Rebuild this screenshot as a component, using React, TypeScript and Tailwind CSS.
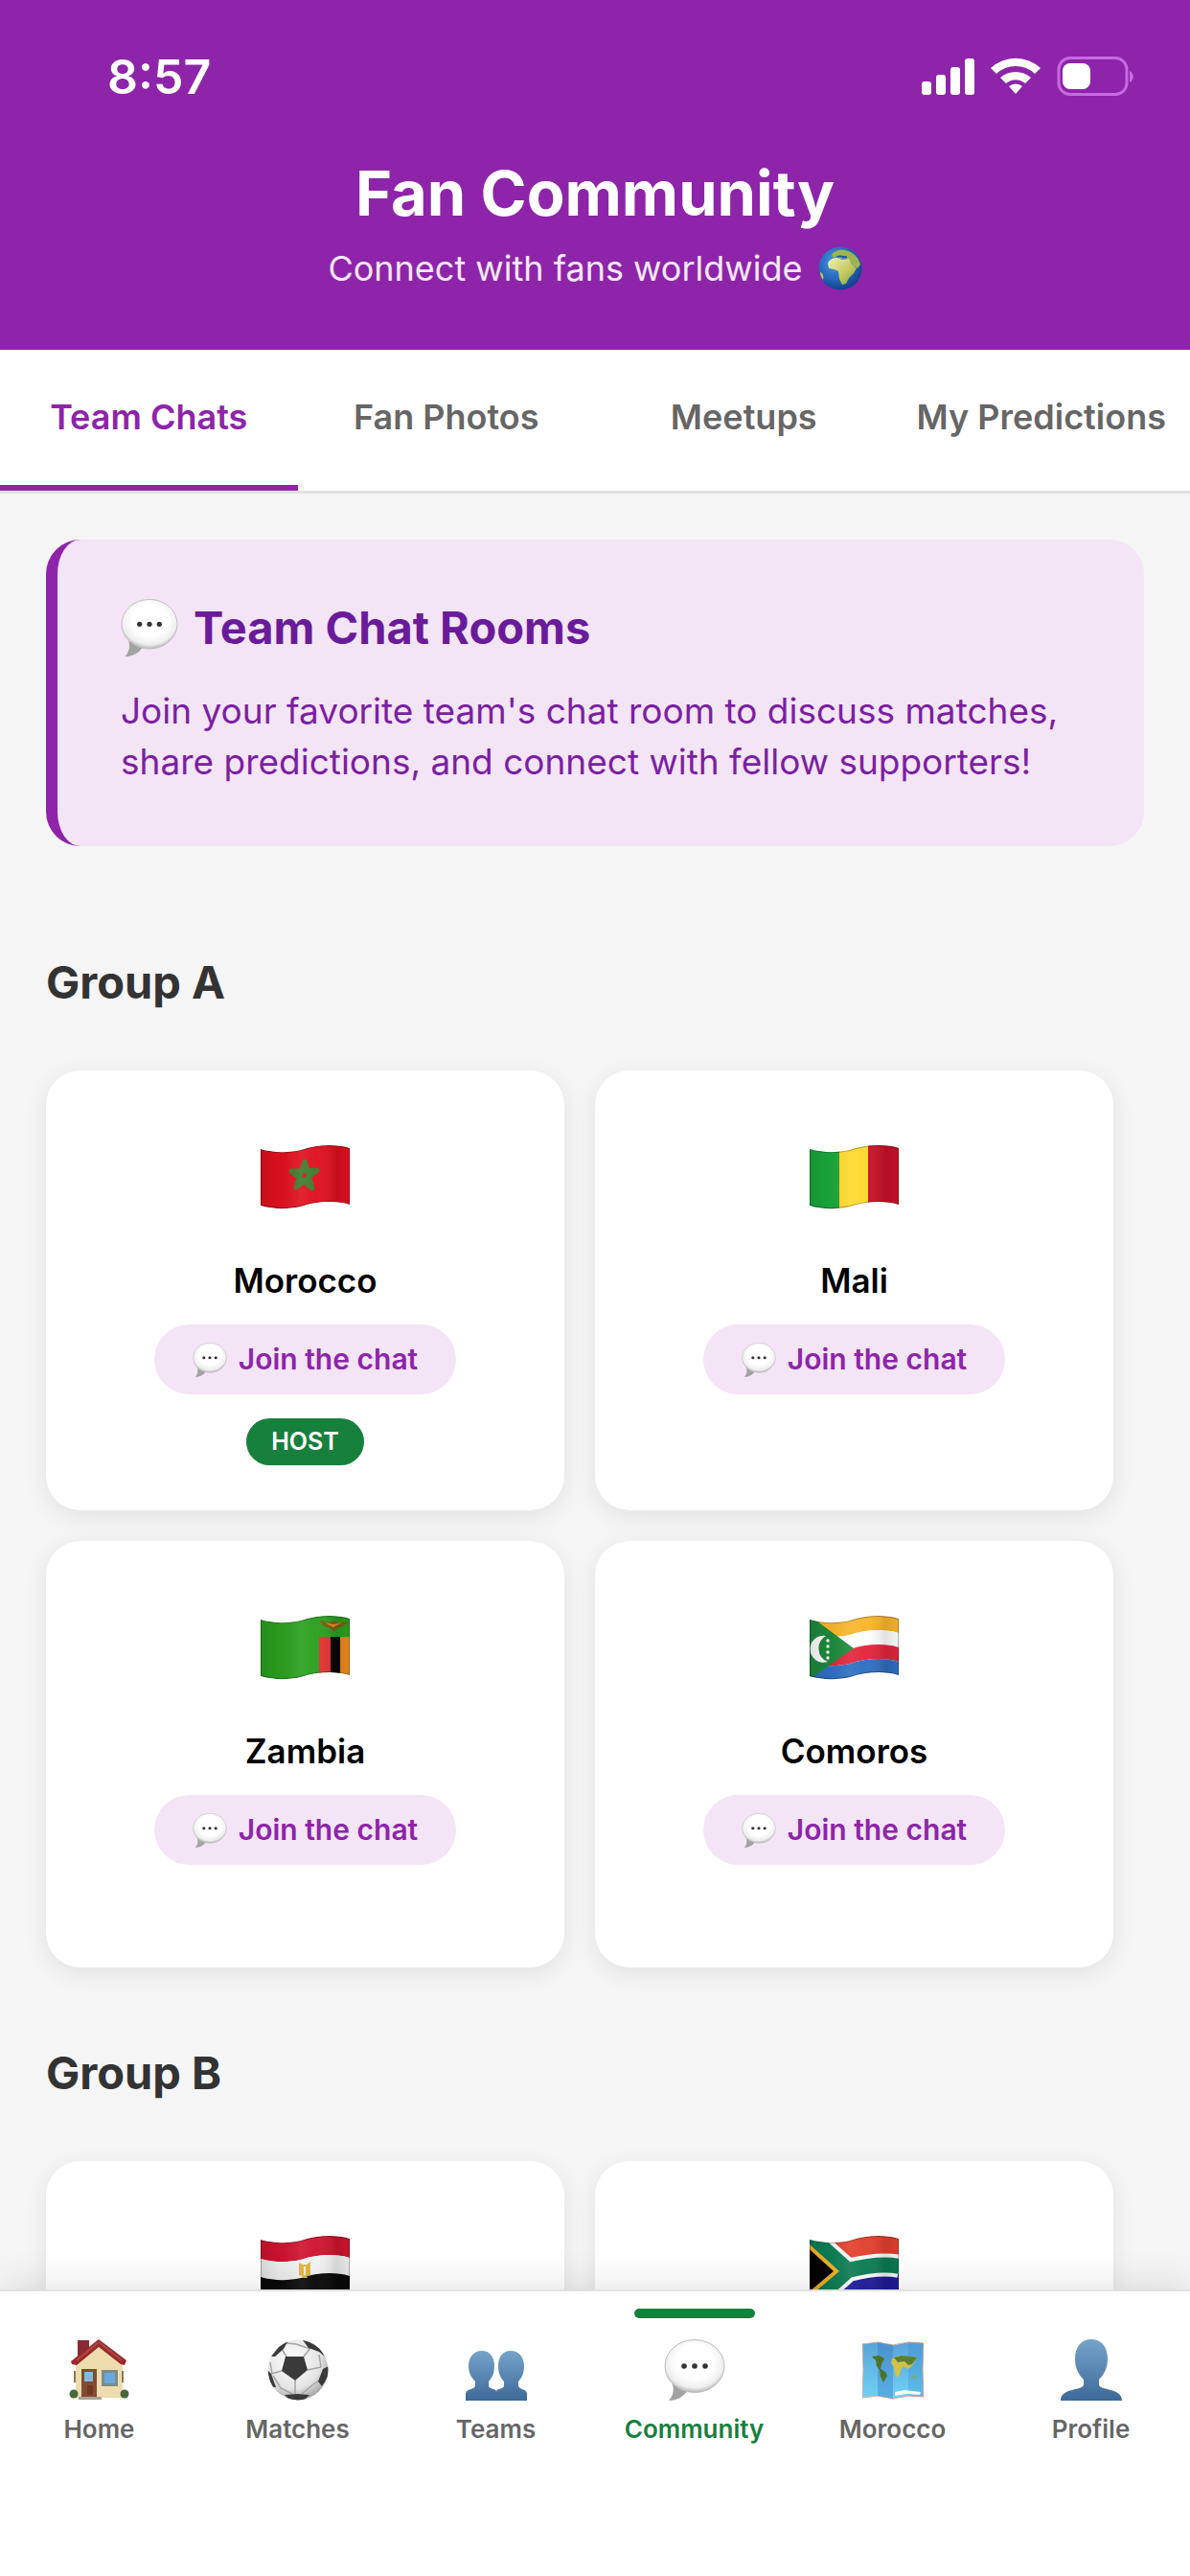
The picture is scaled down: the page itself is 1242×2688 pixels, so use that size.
import { useId, useState, type ReactNode } from "react";

interface Team {
  name: string;
  flag: ReactNode;
  host?: boolean;
}

// Closed band of the waving cloth between two heights (0 = top edge, 59 = bottom edge).
function band(a: number, b: number) {
  return (
    `M0 ${4 + a}C14 ${8 + a} 28 ${8 + a} 42 ${5 + a}C58 ${a} 76 ${a - 2} 93 ${3 + a}` +
    `V${3 + b}C76 ${b - 2} 58 ${b} 42 ${5 + b}C28 ${8 + b} 14 ${8 + b} 0 ${4 + b}Z`
  );
}

function Flag({ label, children }: { label: string; children: ReactNode }) {
  const id = useId();
  return (
    <svg role="img" aria-label={label} viewBox="0 0 93 67" className="h-[67px] w-[93px]">
      <defs>
        <clipPath id={`${id}clip`}>
          <path d={band(0, 59)} />
        </clipPath>
        <linearGradient id={`${id}shade`} x1="0" x2="1" y1="0" y2="0">
          <stop offset="0" stopColor="#000" stopOpacity=".12" />
          <stop offset=".2" stopColor="#000" stopOpacity=".04" />
          <stop offset=".45" stopColor="#fff" stopOpacity=".08" />
          <stop offset=".62" stopColor="#fff" stopOpacity=".03" />
          <stop offset=".85" stopColor="#000" stopOpacity=".12" />
          <stop offset="1" stopColor="#000" stopOpacity=".04" />
        </linearGradient>
      </defs>
      <g clipPath={`url(#${id}clip)`}>
        {children}
        <path d={band(0, 59)} fill={`url(#${id}shade)`} />
        <path d={band(0, 59)} fill="none" stroke="#000" strokeOpacity=".28" strokeWidth="2" />
      </g>
    </svg>
  );
}

const MoroccoFlag = (
  <Flag label="Flag of Morocco">
    <path d={band(0, 59)} fill="#e0101f" />
    <path
      d="M46 17 54 45 32 27 59 26 37 44Z"
      fill="none"
      stroke="#3f7a2c"
      strokeWidth="5"
      strokeLinejoin="round"
    />
  </Flag>
);

const MaliFlag = (
  <Flag label="Flag of Mali">
    <path d="M0 0h31v67H0z" fill="#1aa83b" />
    <path d="M31 0h30v67H31z" fill="#ffd92e" />
    <path d="M61 0h32v67H61z" fill="#cb1228" />
  </Flag>
);

const ZambiaFlag = (
  <Flag label="Flag of Zambia">
    <path d={band(0, 59)} fill="#2aa01f" />
    <path d="M61 22h12v45H61z" fill="#e2342f" />
    <path d="M73 22h10v45H73z" fill="#0b0403" />
    <path d="M83 22h10v45H83z" fill="#e9891c" />
    <path d="M61 5 72 7 76 5 80 7 92 6 86 11 80 13 76 17 72 13 66 11Z" fill="#7c5f12" />
    <path d="M67 7 76 9 85 7 76 12Z" fill="#ee8b23" />
  </Flag>
);

const ComorosFlag = (
  <Flag label="Flag of Comoros">
    <path d={band(0, 15)} fill="#f9b62c" />
    <path d={band(15, 30)} fill="#fff" />
    <path d={band(30, 45)} fill="#e3263c" />
    <path d={band(45, 60)} fill="#2f6fc2" />
    <path d="M0 0 46 34 0 66Z" fill="#1d8a3d" />
    <path d="M17 21a14 14 0 1 0 2 27 15 15 0 0 1-2-27Z" fill="#fff" />
    <g fill="#fff">
      <circle cx="19" cy="26" r="1.7" />
      <circle cx="19" cy="32" r="1.7" />
      <circle cx="19" cy="38" r="1.7" />
      <circle cx="19" cy="44" r="1.7" />
    </g>
  </Flag>
);

const EgyptFlag = (
  <Flag label="Flag of Egypt">
    <path d={band(0, 20)} fill="#d0142f" />
    <path d={band(20, 39)} fill="#f4f4f4" />
    <path d={band(39, 60)} fill="#0a0a0a" />
    <path d="M40 28l4 2h4l4-3v14l-4 1 1 2h-6l1-2-4-1z" fill="#e3b23c" />
    <path d="M46 32v9" stroke="#fff3cf" strokeWidth="2" />
  </Flag>
);

const SouthAfricaFlag = (
  <Flag label="Flag of South Africa">
    <path d={band(0, 30)} fill="#e2412e" />
    <path d={band(29, 60)} fill="#1f1d9c" />
    <path d="M0 0 40 36C56 32 76 28 94 32M0 72 40 36" fill="none" stroke="#fff" strokeWidth="24" />
    <path d="M0 0 40 36C56 32 76 28 94 32M0 72 40 36" fill="none" stroke="#0c7f55" strokeWidth="16" />
    <path d="M-4 8 28 37-4 64Z" fill="#050505" stroke="#f6b42c" strokeWidth="4" />
  </Flag>
);

const GROUPS: { name: string; teams: Team[] }[] = [
  {
    name: "Group A",
    teams: [
      { name: "Morocco", flag: MoroccoFlag, host: true },
      { name: "Mali", flag: MaliFlag },
      { name: "Zambia", flag: ZambiaFlag },
      { name: "Comoros", flag: ComorosFlag },
    ],
  },
  {
    name: "Group B",
    teams: [
      { name: "Egypt", flag: EgyptFlag },
      { name: "South Africa", flag: SouthAfricaFlag },
    ],
  },
];

const TABS = ["Team Chats", "Fan Photos", "Meetups", "My Predictions"];

function SpeechIcon({ className }: { className: string }) {
  const id = useId();
  return (
    <svg viewBox="0 0 64 64" className={className} aria-hidden="true">
      <defs>
        <radialGradient id={id} cx=".5" cy=".42" r=".58">
          <stop offset=".55" stopColor="#fff" />
          <stop offset=".85" stopColor="#eee" />
          <stop offset="1" stopColor="#b5b5b5" />
        </radialGradient>
      </defs>
      <path d="M8 44C11 52 10 58 5 64c9 0 15-4 20-11Z" fill="#a2a2a2" />
      <ellipse cx="32" cy="28" rx="31" ry="27.5" fill={`url(#${id})`} stroke="#bdbdbd" />
      <g fill="#333">
        <circle cx="21" cy="28" r="2.8" />
        <circle cx="32" cy="28" r="2.8" />
        <circle cx="43" cy="28" r="2.8" />
      </g>
    </svg>
  );
}

function GlobeIcon() {
  return (
    <svg viewBox="0 0 46 46" className="size-[46px]" role="img" aria-label="Globe">
      <defs>
        <radialGradient id="ocean" cx=".4" cy=".35" r=".7">
          <stop offset="0" stopColor="#4f9be6" />
          <stop offset=".6" stopColor="#2465b9" />
          <stop offset="1" stopColor="#123c86" />
        </radialGradient>
        <linearGradient id="land" x1="0" x2="1" y1="0" y2="1">
          <stop offset="0" stopColor="#f2f0b4" />
          <stop offset=".55" stopColor="#c6cb62" />
          <stop offset="1" stopColor="#7ea43e" />
        </linearGradient>
      </defs>
      <circle cx="23" cy="23" r="22.5" fill="url(#ocean)" />
      <path d="M14 9c2-4 8-6 14-5 8 2 14 7 16 15l-3 4-5-3-4-6-5-2-5 1-2-3-4 2z" fill="#9db553" />
      <path
        d="M10 18c2-5 6-6 10-6l5 2 7-1 3 6 5 4-3 5-5 5-3 6-4 1-3-6-1-8-5-2-5-1z"
        fill="url(#land)"
      />
      <path d="M2 27c3 1 4 4 3 8-2-2-3-5-3-8z" fill="#b9c258" />
      <path d="M20 11c3-2 6 1 10 0" stroke="#1c569f" strokeWidth="2" fill="none" />
    </svg>
  );
}

function HomeIcon() {
  return (
    <svg viewBox="0 0 64 64" className="size-16" aria-hidden="true">
      <path d="M9 1h12v20H9z" fill="#8c2a33" />
      <path d="M7 27 31 5 56 27V61H7z" fill="#efdcae" />
      <path d="M31 0 60 22l-2 5-4-1L31 8 8 27l-5-1-1-3Z" fill="#962a2e" />
      <path d="M31 3 55 22M31 3 8 22" stroke="#b34644" strokeWidth="2" />
      <path d="M13 31h16v30H13z" fill="#854a33" />
      <path d="M16 34h9v10h-9z" fill="#83b9e4" />
      <path d="M19 48h6v10h-6z" fill="#733a22" />
      <path d="M34 32h17v17H34z" fill="#7c8d84" />
      <path d="M37 35h11v11H37z" fill="#68a8de" />
      <path d="M5 33h2v12H5zM55 33h2v12h-2z" fill="#8f7a4d" />
      <circle cx="5" cy="57" r="4.5" fill="#47683a" />
      <circle cx="58" cy="57" r="4.5" fill="#47683a" />
      <path d="M10 60h24v3H10z" fill="#a9a39a" />
    </svg>
  );
}

function BallIcon() {
  return (
    <svg viewBox="0 0 64 64" className="size-16" aria-hidden="true">
      <defs>
        <radialGradient id="ball" cx=".42" cy=".35" r=".65">
          <stop offset="0" stopColor="#fff" />
          <stop offset=".7" stopColor="#e4e4e4" />
          <stop offset="1" stopColor="#a9a9a9" />
        </radialGradient>
        <clipPath id="ballClip">
          <circle cx="32" cy="32" r="31.5" />
        </clipPath>
      </defs>
      <g clipPath="url(#ballClip)">
        <circle cx="32" cy="32" r="31.5" fill="url(#ball)" />
        <path
          d="M20 18 15 10M38 18l7-9M15 33 4 36M42 32l14-3M29 43v14M45 10 30 5 20 4M5 36 3 24M6 38l8 13 12 6M36 57l12-10 6-4M56 29 54 16"
          fill="none"
          stroke="#a5a5a5"
          strokeWidth="1.5"
        />
        <g fill="#3a3a3a">
          <path d="M19 18h19l4 14-13 11-14-10Z" />
          <path d="M4 18 12 8 22 1 17 10 8 18Z" />
          <path d="M37 1 52 4 60 18 54 13 43 9Z" />
          <path d="M0 32 4 36 9 50 4 50Z" />
          <path d="M64 28 58 31 53 44 57 49 64 38Z" />
          <path d="M18 58 31 57 44 58 38 64H24Z" />
        </g>
      </g>
    </svg>
  );
}

function BustGradient({ id }: { id: string }) {
  return (
    <defs>
      <linearGradient id={id} x1="0" x2="0" y1="0" y2="1">
        <stop offset="0" stopColor="#76a3cb" />
        <stop offset="1" stopColor="#3d6a98" />
      </linearGradient>
    </defs>
  );
}

function PeopleIcon() {
  return (
    <svg viewBox="0 0 64 64" className="size-16" aria-hidden="true">
      <BustGradient id="people" />
      <path
        d="M17 12c8 0 13 6 13 16 0 8-3 13-6 16v4c0 4 6 3 8 6 2-3 8-2 8-6v-4c-3-3-6-8-6-16 0-10 5-16 13-16s14 6 14 16c0 8-3 13-6 16v4c0 5 9 3 9 9v7H0v-7c0-6 10-4 10-9v-4c-3-3-7-8-7-16 0-10 6-16 14-16Z"
        fill="url(#people)"
      />
    </svg>
  );
}

function MapIcon() {
  return (
    <svg viewBox="0 0 64 64" className="size-16" aria-hidden="true">
      <defs>
        <linearGradient id="sea" x1="0" x2="0" y1="0" y2="1">
          <stop offset="0" stopColor="#5aa3d8" />
          <stop offset="1" stopColor="#6fd2f5" />
        </linearGradient>
      </defs>
      <path
        d="M0 5 16 3 32 6 48 3 64 4 63 32 64 60 48 59 32 62 16 59 0 61 1 32Z"
        fill="url(#sea)"
        stroke="#dba994"
      />
      <path d="M16 3 32 6V62L16 59Z" fill="#2e6fc0" fillOpacity=".35" />
      <path d="M48 3 64 4 63 32 64 60 48 59Z" fill="#2e7fd0" fillOpacity=".25" />
      <path d="M10 18 18 17l5 3-3 6-1 5 5 3 2 4-4 7-3-6-1-7-3-4-1-6Z" fill="#4e7226" />
      <path d="M31 20l7-3 9 1 10 1-4 7-5 5-5-3-3 4-2 8-4-3-1-8-3-4Z" fill="#d3c04a" />
      <path d="M33 19l8-2 10 1 6 1-5 7-4 1-4-4-7 1Z" fill="#5c7f2b" />
      <path d="M52 37l5 1v4l-6-1Z" fill="#6cae8e" />
      <path d="M34 55l10-2 17 2-1 3-14-1-12 2Z" fill="#f5fbff" />
    </svg>
  );
}

function PersonIcon() {
  return (
    <svg viewBox="0 0 64 64" className="size-16" aria-hidden="true">
      <BustGradient id="person" />
      <path
        d="M32 0c11 0 17 8 17 21 0 9-4 16-9 21v5c0 7 24 3 24 17H0C0 50 24 54 24 47v-5c-5-5-9-12-9-21C15 8 21 0 32 0Z"
        fill="url(#person)"
      />
    </svg>
  );
}

const NAV = [
  { label: "Home", icon: <HomeIcon /> },
  { label: "Matches", icon: <BallIcon /> },
  { label: "Teams", icon: <PeopleIcon /> },
  { label: "Community", icon: <SpeechIcon className="size-16" />, active: true },
  { label: "Morocco", icon: <MapIcon /> },
  { label: "Profile", icon: <PersonIcon /> },
];

function StatusBar() {
  return (
    <div className="flex h-40 items-center justify-between pl-28 pr-14">
      <span className="text-[50px] font-semibold">8:57</span>
      <svg viewBox="0 0 224 42" className="h-[42px] w-[224px]" aria-hidden="true">
        <g fill="#fff">
          <rect x="0" y="26" width="10" height="14" rx="3" />
          <rect x="15" y="19" width="10" height="21" rx="3" />
          <rect x="30" y="11" width="10" height="29" rx="3" />
          <rect x="45" y="2" width="10" height="38" rx="3" />
          <path d="M72 12a38 38 0 0 1 52 0l-6 6a29 29 0 0 0-40 0Z" />
          <path d="M82 22a24 24 0 0 1 32 0l-6 6a15 15 0 0 0-20 0Z" />
          <path d="M91 31a11 11 0 0 1 14 0l-7 8Z" />
          <rect x="147" y="7" width="29" height="27" rx="8" />
        </g>
        <rect x="143" y="1.5" width="71" height="38" rx="12" fill="none" stroke="#c66be0" strokeWidth="3" />
        <path d="M217 15c5 2 5 10 0 12Z" fill="#c66be0" />
      </svg>
    </div>
  );
}

function TeamCard({ team }: { team: Team }) {
  return (
    <article className="flex min-h-[445px] flex-col items-center rounded-[36px] bg-white pt-[78px] pb-[47px] shadow-[0_6px_24px_rgba(0,0,0,0.08)]">
      {team.flag}
      <h3 className="mt-[50px] text-[35px] leading-[48px] font-semibold text-black">{team.name}</h3>
      <button
        type="button"
        className="mt-[22px] flex h-[73px] items-center gap-3 rounded-full bg-[#f3e5f5] px-10 text-[30px] font-semibold text-[#8e24aa]"
      >
        <SpeechIcon className="size-9" />
        Join the chat
      </button>
      {team.host && (
        <span className="mt-[25px] rounded-full bg-[#17803d] px-[26px] text-[25px] leading-[49px] font-semibold text-white">
          HOST
        </span>
      )}
    </article>
  );
}

export default function App() {
  const [tab, setTab] = useState(TABS[0]);

  return (
    <div className="flex h-screen flex-col bg-[#f5f5f5] font-['Inter',sans-serif]">
      <header className="bg-[#8e24aa] pb-[61px] text-white">
        <StatusBar />
        <h1 className="text-center text-[65px] leading-[84px] font-bold">Fan Community</h1>
        <p className="mt-3 flex items-center justify-center gap-4 text-4xl leading-[48px] text-white/90">
          Connect with fans worldwide
          <GlobeIcon />
        </p>
      </header>

      <div role="tablist" className="grid grid-cols-4 border-b-3 border-[#e0e0e0] bg-white">
        {TABS.map((name) => (
          <button
            key={name}
            type="button"
            role="tab"
            aria-selected={tab === name}
            onClick={() => setTab(name)}
            className={`border-b-6 py-12 text-4xl leading-[45px] font-semibold whitespace-nowrap ${
              tab === name ? "border-[#8e24aa] text-[#8e24aa]" : "border-transparent text-[#666]"
            }`}
          >
            {name}
          </button>
        ))}
      </div>

      <main className="min-h-0 flex-1 overflow-y-auto pt-12 [scrollbar-width:none]">
        <section className="mx-12 mb-8 rounded-[36px] border-l-12 border-[#8e24aa] bg-[#f3e5f5] px-[66px] py-[62px]">
          <h2 className="flex items-center gap-4 text-[47px] leading-[60px] font-bold text-[#6a1b9a]">
            <SpeechIcon className="size-[60px]" />
            Team Chat Rooms
          </h2>
          <p className="mt-[30px] text-[37px] leading-[53px] text-[#7b1fa2]">
            Join your favorite team's chat room to discuss matches, share predictions, and connect with
            fellow supporters!
          </p>
        </section>

        {GROUPS.map((group) => (
          <section key={group.name} className="pt-20 pr-20 pl-12">
            <h2 className="text-[47px] leading-[60px] font-bold text-[#333]">{group.name}</h2>
            <div className="mt-[62px] grid grid-cols-2 gap-8">
              {group.teams.map((team) => (
                <TeamCard key={team.name} team={team} />
              ))}
            </div>
          </section>
        ))}
      </main>

      <nav className="relative grid grid-cols-6 border-t-2 border-[#e0e0e0] bg-white pt-[50px] pb-[135px] shadow-[0_-6px_36px_rgba(0,0,0,0.1)]">
        {NAV.map((item) => (
          <a
            key={item.label}
            href={`#${item.label.toLowerCase()}`}
            aria-current={item.active ? "page" : undefined}
            className={`relative flex flex-col items-center gap-3 text-[26px] leading-[36px] font-semibold ${
              item.active ? "text-[#17803d]" : "text-[#666]"
            }`}
          >
            {item.active && <span className="absolute -top-8 h-[10px] w-[126px] rounded-full bg-[#17803d]" />}
            {item.icon}
            {item.label}
          </a>
        ))}
      </nav>
    </div>
  );
}
